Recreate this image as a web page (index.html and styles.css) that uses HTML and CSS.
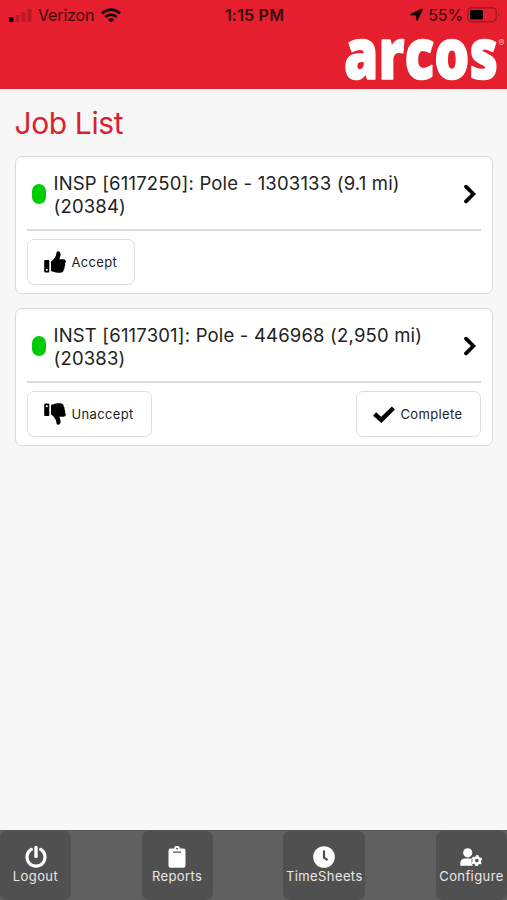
FILE: index.html
```
<!DOCTYPE html>
<html lang="en">
<head>
<meta charset="utf-8">
<title>Job List</title>
<link rel="stylesheet" href="styles.css">
</head>
<body>
<svg width="0" height="0" class="defs" aria-hidden="true">
  <symbol id="thumb" viewBox="0 0 22 22">
    <path fill-rule="evenodd" d="M1.2 9.1h3.1q1 0 1 1v10.4q0 1-1 1H1.2q-1 0-1-1V10.1q0-1 1-1zM2.8 17.8a1 1 0 1 0 .01 0z"/>
    <path d="M7 10.4Q9 9.3 10.2 7.5C11.6 5.7 12 4.8 12.3 2.7 12.5 1 13 .2 14 .2c1.8 0 2.6 1.4 2.6 3.3 0 1.9-.8 3-1.2 4.7h4.1c1.4 0 2.3 1 2.3 2.2 0 .9-.4 1.5-.9 2 .6 1.1.4 2.3-.4 3.1.3 1.2 0 2.3-.8 2.9.2 1.8-1.1 3.3-3.6 3.3h-2.2c-2.5 0-4-1-6-1.5H7z"/>
  </symbol>
  <symbol id="chevron" viewBox="0 0 14 20">
    <path d="M3 2.6l7.4 7.4L3 17.4" fill="none" stroke="#000" stroke-width="3.7" stroke-linecap="round" stroke-linejoin="miter"/>
  </symbol>
</svg>
<header class="header">
  <div class="status">
    <div class="status-left">
      <svg class="signal" width="23" height="14" viewBox="0 0 23 14"><rect x="0" y="9" width="4.5" height="5" rx="1" fill="#160304"/><g fill="#b91a27"><rect x="6.5" y="7" width="4" height="7" rx="1"/><rect x="12.5" y="4" width="4" height="10" rx="1"/><rect x="18.5" y="1" width="4" height="13" rx="1"/></g></svg>
      <span class="carrier">Verizon</span>
      <svg class="wifi" width="20" height="15" viewBox="0 0 20 15"><g fill="none" stroke="#160304" stroke-width="2.7"><path d="M1 5.4Q10-2.2 19 5.4"/><path d="M4.3 9Q10 4.2 15.7 9"/></g><path d="M10 14.5L6.8 11.4Q10 8.9 13.2 11.4z" fill="#160304"/></svg>
    </div>
    <span class="time">1:15 PM</span>
    <div class="status-right">
      <svg width="13" height="13" viewBox="0 0 13 13"><path d="M.6 6.3L11.6 1q1.2-.4.8.8L7.6 12.2q-.7.8-1-.2L6.2 7.3 1 7q-1.2-.2-.4-.7z" fill="#160304" stroke="#160304" stroke-width=".6"/></svg>
      <span class="percent">55%</span>
      <svg class="battery" width="33" height="16" viewBox="0 0 33 16"><rect x=".8" y=".8" width="28.4" height="14" rx="4" fill="none" stroke="#9b1722" stroke-width="1.2"/><rect x="3" y="3" width="13" height="9.6" rx="1.5" fill="#000"/><path d="M31 5.5q2 2.2 0 4.6z" fill="#9b1722"/></svg>
    </div>
  </div>
  <svg class="logo" width="163" height="58" viewBox="0 0 163 58"><text class="brand" x="0" y="43" textLength="154" lengthAdjust="spacingAndGlyphs">arcos</text><text class="reg" x="154.5" y="10">®</text></svg>
</header>
<main class="main">
  <h1>Job List</h1>
  <section class="card">
    <div class="job">
      <span class="dot"></span>
      <p class="desc">INSP [6117250]: Pole - 1303133 (9.1 mi)<br>(20384)</p>
      <svg class="chev" width="14" height="20"><use href="#chevron"/></svg>
    </div>
    <div class="actions">
      <button class="btn accept"><svg width="22" height="22"><use href="#thumb"/></svg><span>Accept</span></button>
    </div>
  </section>
  <section class="card">
    <div class="job">
      <span class="dot"></span>
      <p class="desc">INST [6117301]: Pole - 446968 (2,950 mi)<br>(20383)</p>
      <svg class="chev" width="14" height="20"><use href="#chevron"/></svg>
    </div>
    <div class="actions">
      <button class="btn unaccept"><svg class="down" width="22" height="22"><use href="#thumb"/></svg><span>Unaccept</span></button>
      <button class="btn complete"><svg width="22" height="22" viewBox="0 0 22 22"><path d="M1.6 11l6.7 5.9L20.4 5" fill="none" stroke="#000" stroke-width="4.5"/></svg><span>Complete</span></button>
    </div>
  </section>
</main>
<nav class="tabs">
  <a class="tab logout"><svg width="22" height="22" viewBox="0 0 22 22"><path d="M6.3 3.4a9 9 0 1 0 9.4 0" fill="none" stroke="#fff" stroke-width="3.2" stroke-linecap="round"/><path d="M11 1.6v8.8" stroke="#fff" stroke-width="3.4" stroke-linecap="round"/></svg><span>Logout</span></a>
  <a class="tab reports"><svg width="22" height="22" viewBox="0 0 22 22"><path fill="#fff" fill-rule="evenodd" d="M4.5 2.6h3.6a2.9 2.9 0 0 1 5.8 0h3.6q2 0 2 2v15.2q0 2-2 2h-13q-2 0-2-2V4.6q0-2 2-2zM11 1.8a.8.8 0 1 0 .01 0zM7 5.6v1.2h8V5.6z"/></svg><span>Reports</span></a>
  <a class="tab sheets"><svg width="22" height="22" viewBox="0 0 22 22"><circle cx="11" cy="11" r="10.8" fill="#fff"/><path d="M11 4.6v7l3.6 2.6" fill="none" stroke="#505050" stroke-width="2.2"/></svg><span>TimeSheets</span></a>
  <a class="tab configure"><svg width="22" height="22" viewBox="0 0 22 22"><circle cx="7.7" cy="6.8" r="4.6" fill="#fff"/><path d="M.3 19.8v-2.4q0-5 5-5h5.5q.7 0 1.2.3-1.5 4 1 7.1z" fill="#fff"/><circle cx="16.8" cy="14.6" r="3.1" fill="none" stroke="#fff" stroke-width="2.6"/><circle cx="16.8" cy="14.6" r="4.7" fill="none" stroke="#fff" stroke-width="1.6" stroke-dasharray="2.5 2.42" stroke-dashoffset="1.25" transform="rotate(30 16.8 14.6)"/></svg><span>Configure</span></a>
</nav>
</body>
</html>
```
FILE: styles.css
```
* { box-sizing: border-box; }
body { margin: 0; height: 900px; display: flex; flex-direction: column; overflow: hidden; background: #f7f7f7; color: #222; font-family: Inter, "Liberation Sans", sans-serif; }
svg { display: block; flex: none; }
.defs { position: absolute; }
.header { height: 89px; background: #e51f2e; flex: none; }
.status { height: 30px; display: grid; grid-template-columns: 1fr auto 1fr; align-items: center; padding: 0 7px 0 9px; color: #3b080c; font-size: 16px; }
.status-left, .status-right { display: flex; align-items: center; }
.status-right { justify-content: flex-end; margin-top: -1px; }
.carrier { margin-left: 6px; width: 57px; white-space: nowrap; letter-spacing: -.15px; }
.wifi { margin-left: 6px; }
.time { font-weight: 600; font-size: 16px; letter-spacing: .2px; }
.percent { margin: 0 4px 0 5px; letter-spacing: -.1px; }
.logo { margin: 6px 0 0 344px; overflow: visible; }
.brand { font: 800 71px "Open Sans", sans-serif; fill: #fff; stroke: #fff; stroke-width: 1.6; stroke-linejoin: round; }
.reg { font: 9px Inter, sans-serif; fill: #f5b5ba; }
.main { flex: 1; padding: 15px 14.5px 0; }
h1 { margin: 0 0 14px; height: 38px; line-height: 38px; font-size: 30px; font-weight: 400; letter-spacing: -.4px; color: #dc1f30; }
.card { height: 138px; margin-bottom: 14px; padding: 0 11px; background: #fff; border: 1.5px solid #d9d9d9; border-radius: 7px; }
.job { height: 74px; display: flex; align-items: center; border-bottom: 2px solid #dcdcdc; padding: 0 4px 0 5px; }
.dot { width: 14px; height: 20px; border-radius: 7px; background: #00cc05; margin-top: 2px; }
.desc { margin: 4px 0 0 8px; flex: 1; font-size: 18.5px; line-height: 22.7px; letter-spacing: .18px; white-space: nowrap; }
.chev { margin-top: 2px; }
.actions { display: flex; justify-content: space-between; padding-top: 8px; }
.btn { height: 46px; display: flex; align-items: center; gap: 6px; padding: 0 0 0 16px; background: #fff; border: 1.5px solid #dddddd; border-radius: 7px; color: #222; font: 13px Inter, sans-serif; letter-spacing: .35px; }
.accept { width: 108px; }
.unaccept { width: 125px; }
.complete { width: 125px; }
.down { transform: scaleY(-1); }
.tabs { height: 70px; display: flex; justify-content: space-between; background: #606060; border-top: 1px solid #545454; flex: none; }
.tab { height: 69px; display: flex; flex-direction: column; align-items: center; padding-top: 15px; background: #505050; border-radius: 7px; color: #e8e8e8; font-size: 13px; line-height: 17px; letter-spacing: .4px; }
.tab span { white-space: nowrap; }
.logout, .reports { width: 71px; }
.sheets { width: 82px; }
.configure { width: 71px; }
```
